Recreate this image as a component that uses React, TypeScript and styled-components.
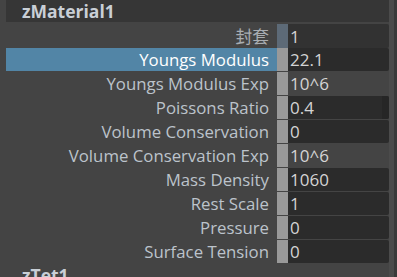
import React from "react";
import styled, { createGlobalStyle } from "styled-components";

const Global = createGlobalStyle`
  html, body { margin: 0; padding: 0; background: #444444; overflow: hidden; }
  body { font-family: "Open Sans", "Noto Sans CJK SC", sans-serif; }
`;

const Frame = styled.div`
  display: flex;
  width: 397px;
  height: 277px;
  background: #444444;
  overflow: hidden;
`;

const Main = styled.div`
  width: 389px;
  display: flex;
  flex-direction: column;
`;

const Scroll = styled.div`
  width: 5px;
  background: #4b4b4b;
  border-right: 3px solid #3a3a3a;
`;

const Header = styled.div<{ $collapsed?: boolean }>`
  margin-left: 6px;
  height: 22px;
  flex: none;
  display: flex;
  align-items: center;
  padding-left: 16px;
  background: ${(p) => (p.$collapsed ? "#444444" : "#363636")};
  color: #c9cfd6;
  font-weight: 700;
  font-size: 17.5px;
  font-family: "Open Sans", sans-serif;
`;

const Rows = styled.div`
  display: flex;
  flex-direction: column;
  gap: 2px;
  padding: 2px 0 2px 6px;
`;

const Row = styled.div`
  display: grid;
  grid-template-columns: 271px 11px 101px;
  height: 22px;
`;

const Label = styled.div<{ $active?: boolean; $cjk?: boolean }>`
  display: flex;
  align-items: center;
  justify-content: flex-end;
  padding-right: 8px;
  background: ${(p) => (p.$active ? "#5285a6" : "transparent")};
  color: ${(p) => (p.$active ? "#ffffff" : p.$cjk ? "#a9adb2" : "#bcc3cb")};
  font-size: 16.8px;
  white-space: nowrap;
`;

const Strip = styled.div<{ $tint?: boolean }>`
  background: ${(p) => (p.$tint ? "#5d6a77" : "#999999")};
`;

const Field = styled.div<{ $plain?: boolean; $light?: boolean }>`
  position: relative;
  display: flex;
  align-items: center;
  padding-left: 2px;
  border-radius: 0 2px 2px 0;
  background: ${(p) => (p.$plain ? "transparent" : p.$light ? "#323232" : "#2b2b2b")};
  color: #d4d4d4;
  font-size: 17px;
`;

const Knob = styled.div`
  position: absolute;
  right: 0;
  top: 0;
  bottom: 0;
  width: 7px;
  background: #262626;
  border-radius: 0 2px 2px 0;
`;

type Attr = { label: string; value: string; active?: boolean; plain?: boolean; tint?: boolean; knob?: boolean };

const attrs: Attr[] = [
  { label: "封套", value: "1", tint: true },
  { label: "Youngs Modulus", value: "22.1", active: true },
  { label: "Youngs Modulus Exp", value: "10^6", plain: true },
  { label: "Poissons Ratio", value: "0.4", knob: true },
  { label: "Volume Conservation", value: "0" },
  { label: "Volume Conservation Exp", value: "10^6", plain: true },
  { label: "Mass Density", value: "1060" },
  { label: "Rest Scale", value: "1" },
  { label: "Pressure", value: "0" },
  { label: "Surface Tension", value: "0" },
];

export default function App() {
  return (
    <Frame>
      <Global />
      <Main>
        <Header>zMaterial1</Header>
        <Rows>
          {attrs.map((a) => (
            <Row key={a.label}>
              <Label $active={a.active} $cjk={a.tint}>{a.label}</Label>
              <Strip $tint={a.tint} />
              <Field $plain={a.plain} $light={a.tint}>
                {a.value}
                {a.knob && <Knob />}
              </Field>
            </Row>
          ))}
        </Rows>
        <Header $collapsed>zTet1</Header>
      </Main>
      <Scroll />
    </Frame>
  );
}
